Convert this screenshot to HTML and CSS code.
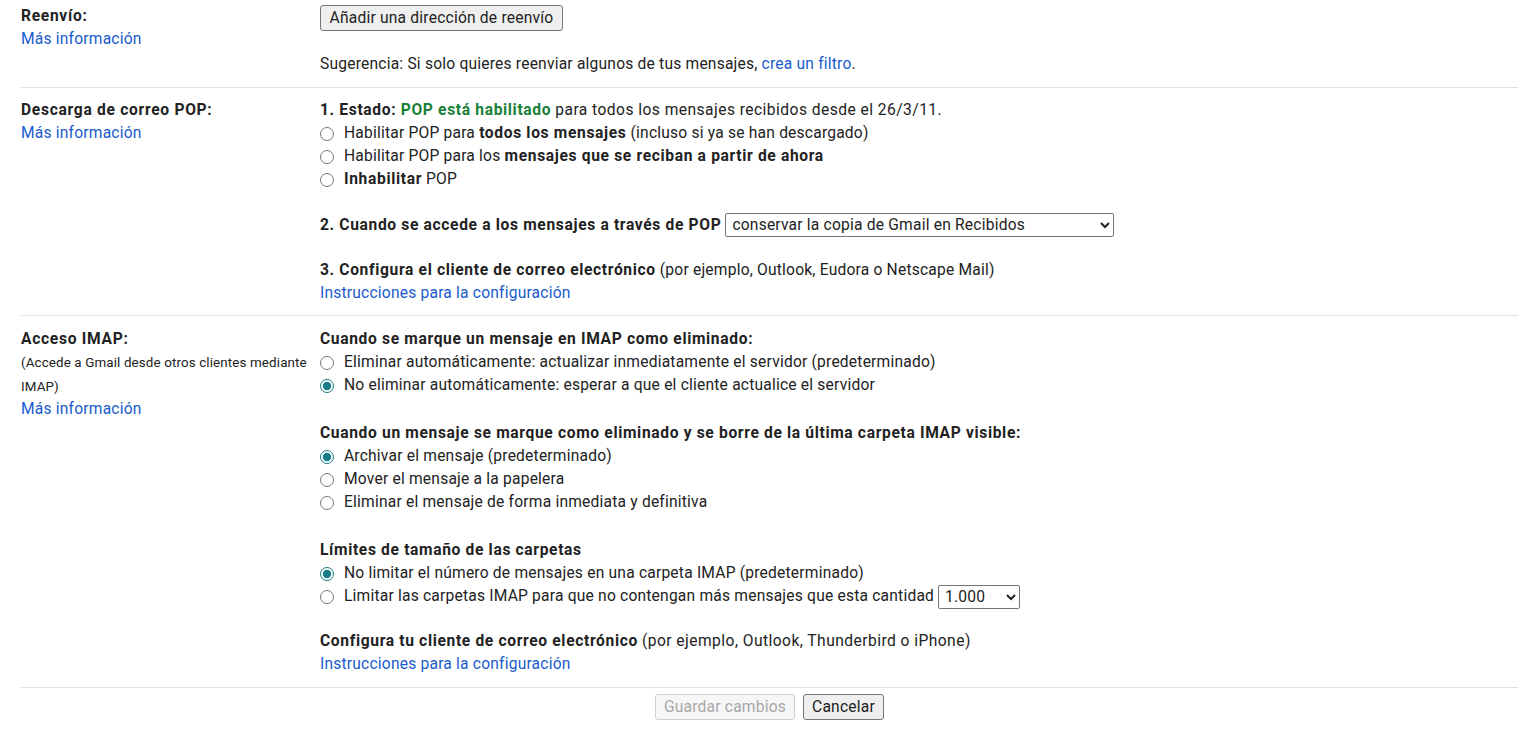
FILE: index.html
```html
<!DOCTYPE html>
<html lang="es">
<head>
<meta charset="utf-8">
<title>Configuración - Reenvío y correo POP/IMAP</title>
<link rel="stylesheet" href="styles.css">
</head>
<body>
<div class="page">
  <div class="row row-fwd">
    <div class="label">
      <div class="title">Reenvío:</div>
      <a class="link" href="#">Más información</a>
    </div>
    <div class="content">
      <div class="btn-line"><button class="btn btn-add" type="button">Añadir una dirección de reenvío</button></div>
      <div class="hint">Sugerencia: Si solo quieres reenviar algunos de tus mensajes, <a class="link" href="#">crea un filtro</a>.</div>
    </div>
  </div>

  <div class="row row-pop">
    <div class="label">
      <div class="title">Descarga de correo POP:</div>
      <a class="link" href="#">Más información</a>
    </div>
    <div class="content">
      <div class="group">
        <div class="line"><b>1. Estado: <span class="ok">POP está habilitado</span></b> <span class="wide">para todos los mensajes recibidos desde el 26/3/11.</span></div>
        <label class="opt"><input type="radio" name="pop"> <span>Habilitar POP para <b>todos los mensajes</b> (incluso si ya se han descargado)</span></label>
        <label class="opt"><input type="radio" name="pop"> <span>Habilitar POP para los <b>mensajes que se reciban a partir de ahora</b></span></label>
        <label class="opt"><input type="radio" name="pop"> <span><b>Inhabilitar</b> POP</span></label>
      </div>
      <div class="group g-select">
        <div class="line sel-line"><b>2. Cuando se accede a los mensajes a través de POP</b>
          <select class="sel sel-wide">
            <option>conservar la copia de Gmail en Recibidos</option>
            <option>marcar la copia de Gmail como leída</option>
            <option>archivar la copia de Gmail</option>
            <option>eliminar la copia de Gmail</option>
          </select>
        </div>
      </div>
      <div class="group g-after-select">
        <div class="line"><b>3. Configura el cliente de correo electrónico</b> (por ejemplo, Outlook, Eudora o Netscape Mail)</div>
        <a class="link line" href="#">Instrucciones para la configuración</a>
      </div>
    </div>
  </div>

  <div class="row row-imap">
    <div class="label">
      <div class="title">Acceso IMAP:</div>
      <div class="note">(Accede a Gmail desde otros clientes mediante IMAP)</div>
      <a class="link" href="#">Más información</a>
    </div>
    <div class="content">
      <div class="group">
        <div class="line"><b>Cuando se marque un mensaje en IMAP como eliminado:</b></div>
        <label class="opt"><input type="radio" name="del"> <span>Eliminar automáticamente: actualizar inmediatamente el servidor (predeterminado)</span></label>
        <label class="opt"><input type="radio" name="del" checked> <span>No eliminar automáticamente: esperar a que el cliente actualice el servidor</span></label>
      </div>
      <div class="group g-wide">
        <div class="line"><b>Cuando un mensaje se marque como eliminado y se borre de la última carpeta IMAP visible:</b></div>
        <label class="opt"><input type="radio" name="exp" checked> <span>Archivar el mensaje (predeterminado)</span></label>
        <label class="opt"><input type="radio" name="exp"> <span>Mover el mensaje a la papelera</span></label>
        <label class="opt"><input type="radio" name="exp"> <span>Eliminar el mensaje de forma inmediata y definitiva</span></label>
      </div>
      <div class="group g-wide">
        <div class="line"><b>Límites de tamaño de las carpetas</b></div>
        <label class="opt"><input type="radio" name="lim" checked> <span>No limitar el número de mensajes en una carpeta IMAP (predeterminado)</span></label>
        <label class="opt"><input type="radio" name="lim"> <span>Limitar las carpetas IMAP para que no contengan más mensajes que esta cantidad</span>
          <select class="sel sel-small">
            <option>1.000</option>
            <option>2.000</option>
            <option>5.000</option>
            <option>10.000</option>
          </select>
        </label>
      </div>
      <div class="group g-last">
        <div class="line"><b>Configura tu cliente de correo electrónico</b> <span class="wide">(por ejemplo, Outlook, Thunderbird o iPhone)</span></div>
        <a class="link line" href="#">Instrucciones para la configuración</a>
      </div>
    </div>
  </div>

  <div class="actions">
    <button class="btn btn-save" type="button" disabled>Guardar cambios</button>
    <button class="btn btn-cancel" type="button">Cancelar</button>
  </div>
</div>
</body>
</html>
```

FILE: styles.css
```css
html, body {
  margin: 0;
  padding: 0;
  background: #ffffff;
}

body {
  font-family: Roboto, "Liberation Sans", Arial, sans-serif;
  font-size: 15.6px;
  line-height: 23px;
  letter-spacing: 0.2px;
  color: #222222;
}

.page {
  margin-left: 21px;
  width: 1497px;
}

.row {
  display: flex;
  border-bottom: 1px solid #e2e2e2;
  padding: 11px 0 11px 0;
}

.row-fwd {
  padding-top: 5px;
  padding-bottom: 11px;
}

.row-pop {
  padding-bottom: 10px;
}

.row-imap {
  padding-top: 12px;
}

.label {
  width: 299px;
  flex: none;
  display: flex;
  flex-direction: column;
  align-items: flex-start;
}

.title {
  font-weight: 700;
  letter-spacing: 0.7px;
}

.note {
  font-size: 13.4px;
  line-height: 23.5px;
  letter-spacing: 0.12px;
  width: 292px;
}

.content {
  flex: 1;
  display: flex;
  flex-direction: column;
  align-items: flex-start;
}

.link {
  color: #1a5bcc;
  text-decoration: none;
}

.line {
  display: block;
}

.wide {
  letter-spacing: 0.45px;
}

.ok {
  color: #188038;
}

b {
  font-weight: 700;
  letter-spacing: 0.65px;
}

.opt {
  display: flex;
  align-items: center;
  height: 23px;
}

.opt input[type="radio"] {
  margin: 0 10px 0 0;
  width: 14px;
  height: 14px;
  accent-color: #187c86;
}

.group + .group {
  margin-top: 22px;
}

.group.g-select {
  margin-top: 22px;
}

.group.g-wide {
  margin-top: 25px;
}

.group.g-after-select {
  margin-top: 22px;
}

.group.g-last {
  margin-top: 22px;
}

.sel-line {
  display: flex;
  align-items: center;
  height: 24px;
  gap: 4px;
}

.sel {
  font-family: Roboto, "Liberation Sans", Arial, sans-serif;
  font-size: 15.6px;
  letter-spacing: 0.2px;
  color: #222222;
  background: #ffffff;
  border: 1px solid #767676;
  border-radius: 2px;
  height: 24px;
  padding: 0 2px;
}

.sel-wide {
  width: 389px;
}

.sel-small {
  width: 82px;
  margin-left: 4px;
}

.btn {
  font-family: Roboto, "Liberation Sans", Arial, sans-serif;
  font-size: 15.6px;
  letter-spacing: 0.2px;
  color: #222222;
  background: #efefef;
  border: 1px solid #767676;
  border-radius: 3px;
  height: 26px;
  padding: 0 6px;
  line-height: 24px;
}

.btn-add {
  width: 243px;
}

.btn-line {
  margin-top: 0;
  height: 26px;
}

.hint {
  margin-top: 22px;
}

.actions {
  display: flex;
  justify-content: center;
  gap: 8px;
  padding-top: 6px;
}

.btn-save {
  color: #a8a8a8;
  background: #f6f6f6;
  border-color: #cfcfcf;
  width: 140px;
}

.btn-cancel {
  width: 81px;
}
```
